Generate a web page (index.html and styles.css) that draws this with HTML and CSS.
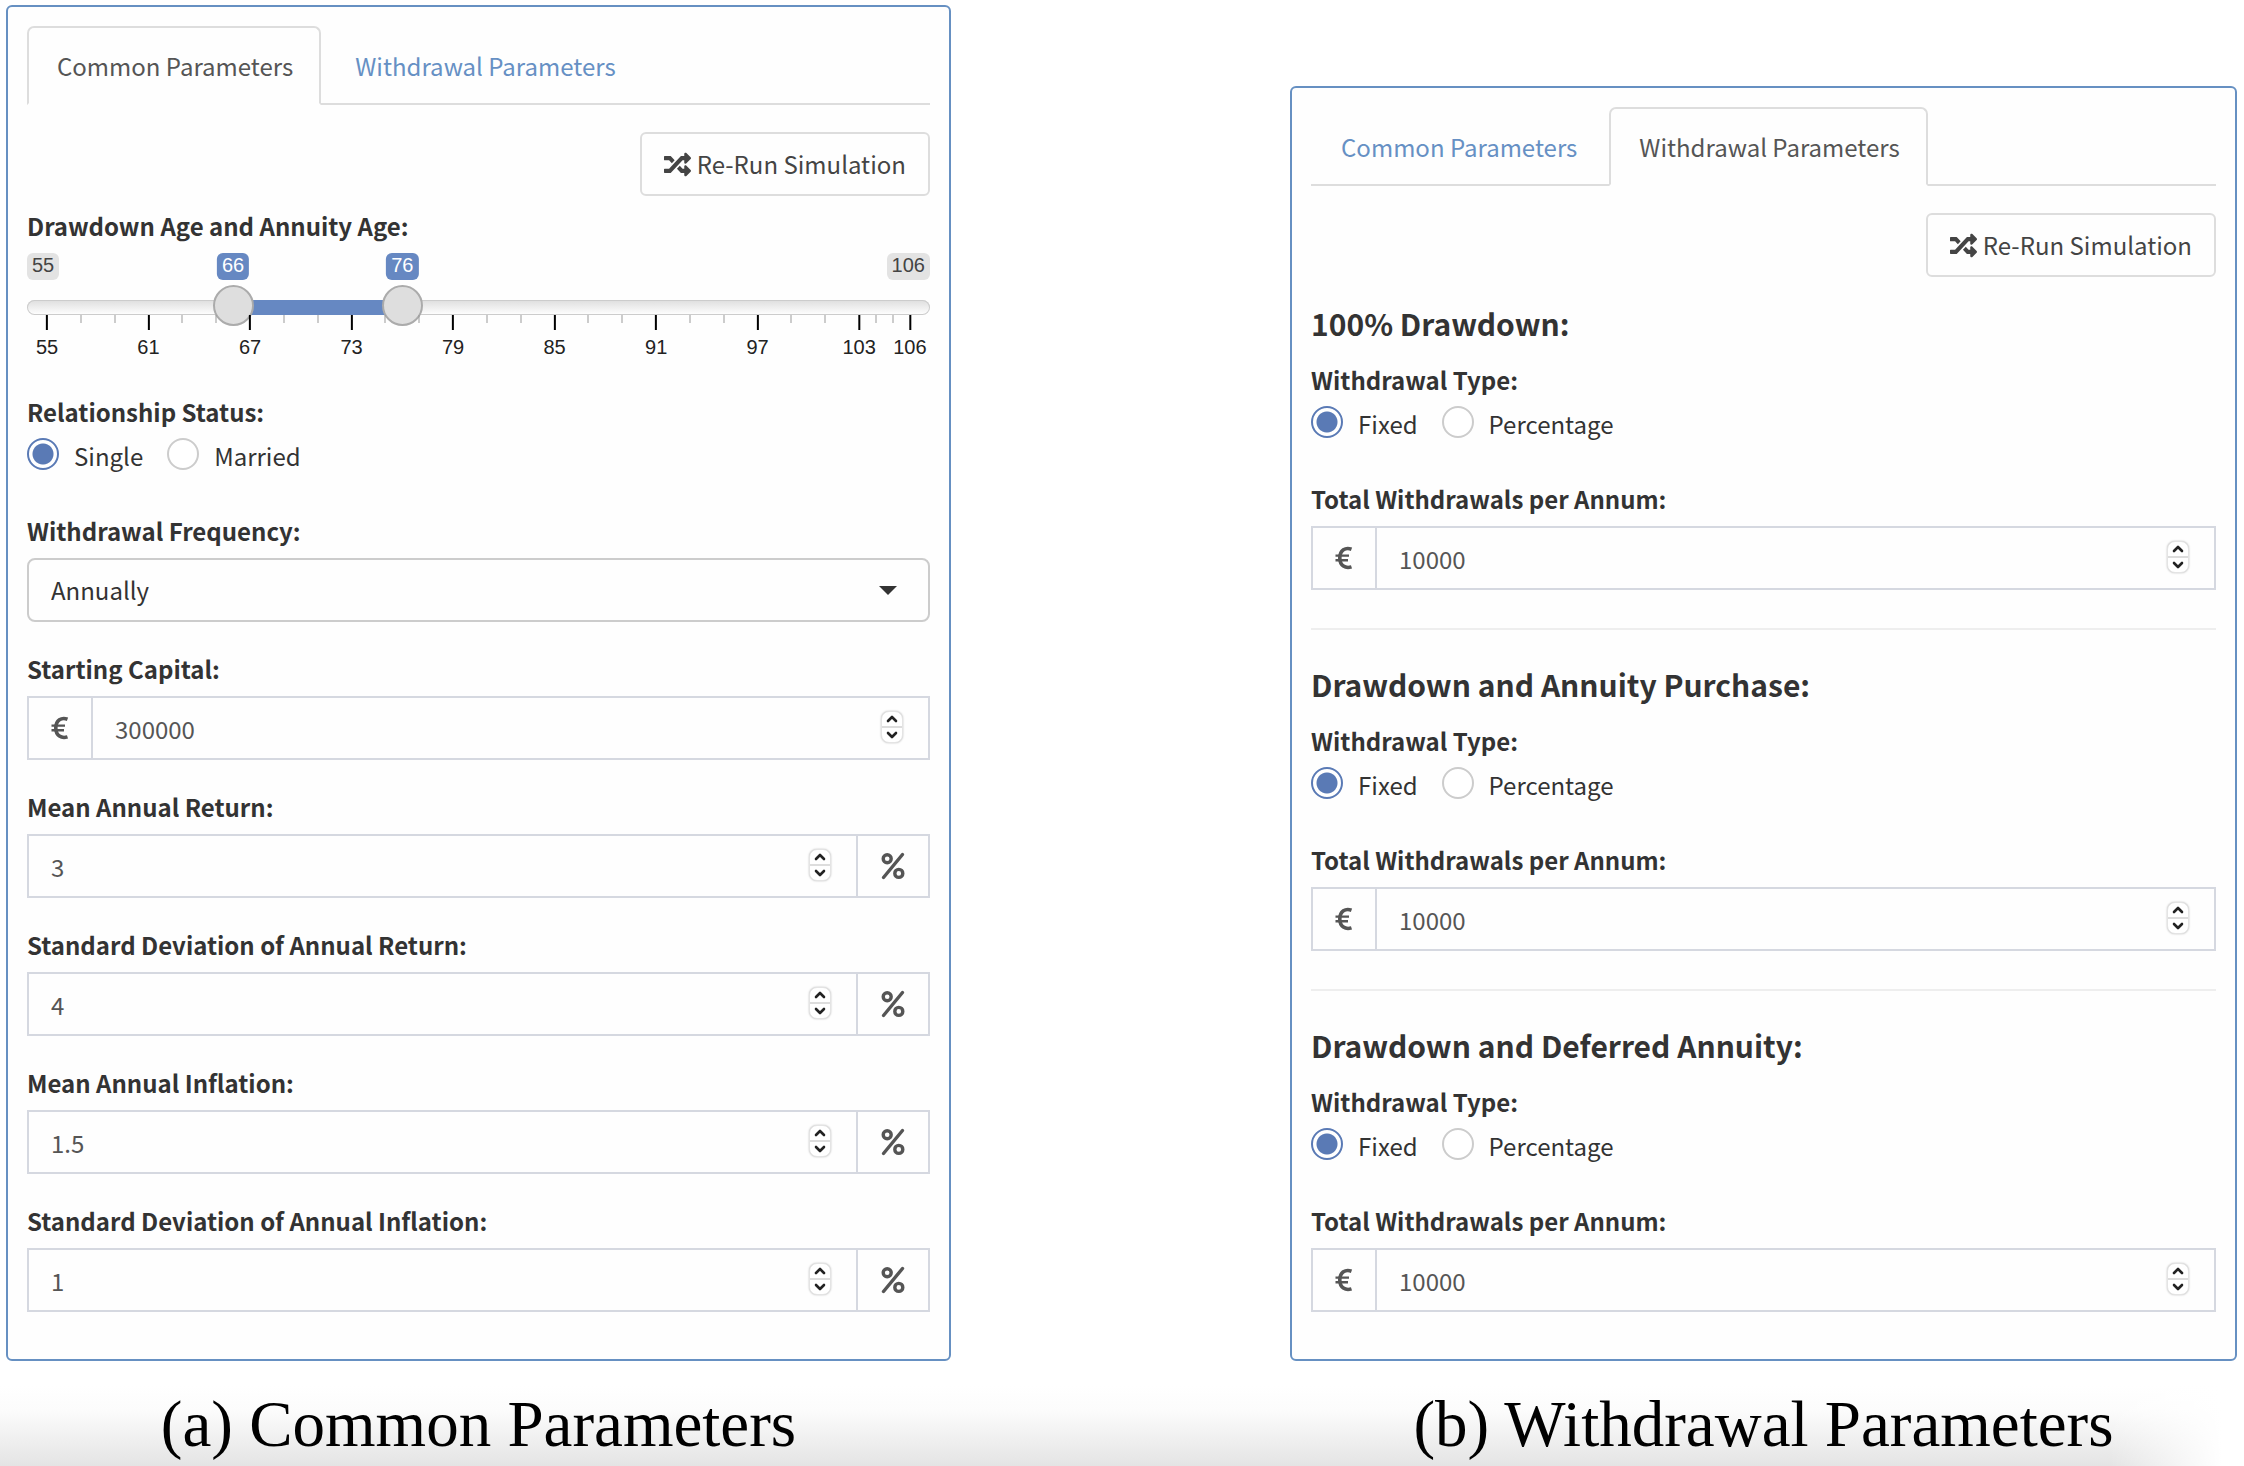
FILE: index.html
```html
<!DOCTYPE html>
<html lang="en">
<head>
<meta charset="utf-8">
<meta name="viewport" content="width=device-width, initial-scale=1">
<title>Simulation Parameters</title>
<link rel="stylesheet" href="styles.css">
</head>
<body>
<svg class="sprite" aria-hidden="true">
  <symbol id="shuffle" viewBox="0 0 512 512"><path d="M504.971 359.029c9.373 9.373 9.373 24.569 0 33.941l-80 79.984c-15.01 15.01-40.971 4.49-40.971-16.971V416h-58.785a12.004 12.004 0 0 1-8.773-3.812l-70.556-75.596 53.333-57.143L352 336h32v-39.981c0-21.438 25.943-31.998 40.971-16.971l80 79.981zM12 176h84l52.781 56.551 53.333-57.143-70.556-75.596A11.999 11.999 0 0 0 122.785 96H12c-6.627 0-12 5.373-12 12v56c0 6.627 5.373 12 12 12zm372 0v39.984c0 21.46 25.961 31.98 40.971 16.971l80-79.984c9.373-9.373 9.373-24.569 0-33.941l-80-79.981C409.943 24.021 384 34.582 384 56.019V96h-58.785a12.004 12.004 0 0 0-8.773 3.812L96 336H12c-6.627 0-12 5.373-12 12v56c0 6.627 5.373 12 12 12h110.785c3.326 0 6.503-1.381 8.773-3.812L352 176h32z" fill="currentColor"/></symbol>
  <symbol id="euro" viewBox="0 0 18 24"><path d="M16.5 3.2C10.500 0.900 4.800 4.200 4.800 12S10.500 22.800 16.500 20.900" fill="none" stroke="currentColor" stroke-width="3.600"/><path d="M0.500 9.600H14M0.500 14.200H13" fill="none" stroke="currentColor" stroke-width="2.400"/></symbol>
  <symbol id="percent" viewBox="0 0 24 28"><g fill="none" stroke="currentColor" stroke-width="3.400"><circle cx="6.200" cy="6.800" r="4"/><circle cx="17.800" cy="21.400" r="4"/><path d="M21.500 2.500L2.500 25.500" stroke-linecap="round"/></g></symbol>
  <symbol id="up" viewBox="0 0 12 8"><path d="M2 6L6 2L10 6" fill="none" stroke="currentColor" stroke-width="2.600" stroke-linecap="round" stroke-linejoin="round"/></symbol>
  <symbol id="down" viewBox="0 0 12 8"><path d="M2 2L6 6L10 2" fill="none" stroke="currentColor" stroke-width="2.600" stroke-linecap="round" stroke-linejoin="round"/></symbol>
</svg>
<main class="page">
  <figure class="figure">
    <section class="panel">
      <nav class="tabs">
        <a class="tab tab-active" href="#common">Common Parameters</a>
        <a class="tab" href="#withdrawal">Withdrawal Parameters</a>
      </nav>
      <div class="actions"><button class="run" type="button"><svg class="run-icon"><use href="#shuffle"/></svg>Re-Run Simulation</button></div>

      <div class="slider-field">
        <label class="label" for="drawdown-age">Drawdown Age and Annuity Age:</label>
        <div class="slider">
          <div class="badges">
            <span class="badge">55</span>
            <span class="badge">106</span>
            <div class="rail">
              <output class="badge badge-value" style="left:21.57%">66</output>
              <output class="badge badge-value" style="left:41.18%">76</output>
            </div>
          </div>
          <div class="track">
            <div class="rail"><span class="fill" style="left:21.57%;width:19.61%"></span></div>
            <input class="range" id="drawdown-age" type="range" min="55" max="106" value="66">
            <input class="range" type="range" min="55" max="106" value="76" aria-label="Annuity Age">
          </div>
          <div class="scale">
            <div class="rail">
              <span class="tick major" style="left:0%">55</span>
              <span class="tick" style="left:3.92%"></span>
              <span class="tick" style="left:7.84%"></span>
              <span class="tick major" style="left:11.76%">61</span>
              <span class="tick" style="left:15.69%"></span>
              <span class="tick" style="left:19.61%"></span>
              <span class="tick major" style="left:23.53%">67</span>
              <span class="tick" style="left:27.45%"></span>
              <span class="tick" style="left:31.37%"></span>
              <span class="tick major" style="left:35.29%">73</span>
              <span class="tick" style="left:39.22%"></span>
              <span class="tick" style="left:43.14%"></span>
              <span class="tick major" style="left:47.06%">79</span>
              <span class="tick" style="left:50.98%"></span>
              <span class="tick" style="left:54.90%"></span>
              <span class="tick major" style="left:58.82%">85</span>
              <span class="tick" style="left:62.75%"></span>
              <span class="tick" style="left:66.67%"></span>
              <span class="tick major" style="left:70.59%">91</span>
              <span class="tick" style="left:74.51%"></span>
              <span class="tick" style="left:78.43%"></span>
              <span class="tick major" style="left:82.35%">97</span>
              <span class="tick" style="left:86.27%"></span>
              <span class="tick" style="left:90.20%"></span>
              <span class="tick major" style="left:94.12%">103</span>
              <span class="tick" style="left:96.08%"></span>
              <span class="tick" style="left:98.04%"></span>
              <span class="tick major" style="left:100%">106</span>
            </div>
          </div>
        </div>
      </div>

      <fieldset class="radios">
        <legend class="label">Relationship Status:</legend>
        <div class="options">
          <label class="option"><input class="radio" type="radio" name="status" checked><span>Single</span></label>
          <label class="option"><input class="radio" type="radio" name="status"><span>Married</span></label>
        </div>
      </fieldset>

      <div class="field">
        <label class="label" for="frequency">Withdrawal Frequency:</label>
        <div class="select-box">
          <select class="select" id="frequency"><option>Annually</option></select>
          <svg class="caret" viewBox="0 0 18 9" aria-hidden="true"><path d="M0 0H18L9 9Z" fill="#333"/></svg>
        </div>
      </div>

      <div class="field">
        <label class="label" for="capital">Starting Capital:</label>
        <div class="group">
          <span class="addon addon-start"><svg class="euro"><use href="#euro"/></svg></span>
          <input class="number" id="capital" type="number" value="300000">
          <span class="spin"><button class="step" type="button" aria-label="Increase"><svg class="chev"><use href="#up"/></svg></button><button class="step" type="button" aria-label="Decrease"><svg class="chev"><use href="#down"/></svg></button></span>
        </div>
      </div>

      <div class="field">
        <label class="label" for="mean-return">Mean Annual Return:</label>
        <div class="group">
          <input class="number" id="mean-return" type="number" value="3">
          <span class="spin"><button class="step" type="button" aria-label="Increase"><svg class="chev"><use href="#up"/></svg></button><button class="step" type="button" aria-label="Decrease"><svg class="chev"><use href="#down"/></svg></button></span>
          <span class="addon addon-end"><svg class="percent"><use href="#percent"/></svg></span>
        </div>
      </div>

      <div class="field">
        <label class="label" for="sd-return">Standard Deviation of Annual Return:</label>
        <div class="group">
          <input class="number" id="sd-return" type="number" value="4">
          <span class="spin"><button class="step" type="button" aria-label="Increase"><svg class="chev"><use href="#up"/></svg></button><button class="step" type="button" aria-label="Decrease"><svg class="chev"><use href="#down"/></svg></button></span>
          <span class="addon addon-end"><svg class="percent"><use href="#percent"/></svg></span>
        </div>
      </div>

      <div class="field">
        <label class="label" for="mean-inflation">Mean Annual Inflation:</label>
        <div class="group">
          <input class="number" id="mean-inflation" type="number" step="0.1" value="1.5">
          <span class="spin"><button class="step" type="button" aria-label="Increase"><svg class="chev"><use href="#up"/></svg></button><button class="step" type="button" aria-label="Decrease"><svg class="chev"><use href="#down"/></svg></button></span>
          <span class="addon addon-end"><svg class="percent"><use href="#percent"/></svg></span>
        </div>
      </div>

      <div class="field">
        <label class="label" for="sd-inflation">Standard Deviation of Annual Inflation:</label>
        <div class="group">
          <input class="number" id="sd-inflation" type="number" value="1">
          <span class="spin"><button class="step" type="button" aria-label="Increase"><svg class="chev"><use href="#up"/></svg></button><button class="step" type="button" aria-label="Decrease"><svg class="chev"><use href="#down"/></svg></button></span>
          <span class="addon addon-end"><svg class="percent"><use href="#percent"/></svg></span>
        </div>
      </div>
    </section>
    <figcaption class="caption">(a) Common Parameters</figcaption>
  </figure>

  <figure class="figure">
    <section class="panel">
      <nav class="tabs">
        <a class="tab" href="#common">Common Parameters</a>
        <a class="tab tab-active" href="#withdrawal">Withdrawal Parameters</a>
      </nav>
      <div class="actions"><button class="run" type="button"><svg class="run-icon"><use href="#shuffle"/></svg>Re-Run Simulation</button></div>

      <div class="strategy">
        <h2 class="heading">100% Drawdown:</h2>
        <fieldset class="radios">
          <legend class="label">Withdrawal Type:</legend>
          <div class="options">
            <label class="option"><input class="radio" type="radio" name="type-1" checked><span>Fixed</span></label>
            <label class="option"><input class="radio" type="radio" name="type-1"><span>Percentage</span></label>
          </div>
        </fieldset>
        <div class="field">
          <label class="label" for="total-1">Total Withdrawals per Annum:</label>
          <div class="group">
            <span class="addon addon-start"><svg class="euro"><use href="#euro"/></svg></span>
            <input class="number" id="total-1" type="number" value="10000">
            <span class="spin"><button class="step" type="button" aria-label="Increase"><svg class="chev"><use href="#up"/></svg></button><button class="step" type="button" aria-label="Decrease"><svg class="chev"><use href="#down"/></svg></button></span>
          </div>
        </div>
      </div>
      <hr class="rule">
      <div class="strategy">
        <h2 class="heading">Drawdown and Annuity Purchase:</h2>
        <fieldset class="radios">
          <legend class="label">Withdrawal Type:</legend>
          <div class="options">
            <label class="option"><input class="radio" type="radio" name="type-2" checked><span>Fixed</span></label>
            <label class="option"><input class="radio" type="radio" name="type-2"><span>Percentage</span></label>
          </div>
        </fieldset>
        <div class="field">
          <label class="label" for="total-2">Total Withdrawals per Annum:</label>
          <div class="group">
            <span class="addon addon-start"><svg class="euro"><use href="#euro"/></svg></span>
            <input class="number" id="total-2" type="number" value="10000">
            <span class="spin"><button class="step" type="button" aria-label="Increase"><svg class="chev"><use href="#up"/></svg></button><button class="step" type="button" aria-label="Decrease"><svg class="chev"><use href="#down"/></svg></button></span>
          </div>
        </div>
      </div>
      <hr class="rule">
      <div class="strategy">
        <h2 class="heading">Drawdown and Deferred Annuity:</h2>
        <fieldset class="radios">
          <legend class="label">Withdrawal Type:</legend>
          <div class="options">
            <label class="option"><input class="radio" type="radio" name="type-3" checked><span>Fixed</span></label>
            <label class="option"><input class="radio" type="radio" name="type-3"><span>Percentage</span></label>
          </div>
        </fieldset>
        <div class="field">
          <label class="label" for="total-3">Total Withdrawals per Annum:</label>
          <div class="group">
            <span class="addon addon-start"><svg class="euro"><use href="#euro"/></svg></span>
            <input class="number" id="total-3" type="number" value="10000">
            <span class="spin"><button class="step" type="button" aria-label="Increase"><svg class="chev"><use href="#up"/></svg></button><button class="step" type="button" aria-label="Decrease"><svg class="chev"><use href="#down"/></svg></button></span>
          </div>
        </div>
      </div>
    </section>
    <figcaption class="caption">(b) Withdrawal Parameters</figcaption>
  </figure>
</main>
</body>
</html>
```

FILE: styles.css
```css
*, *::before, *::after { box-sizing: border-box; }

body {
  margin: 0;
  background: #fff;
  color: #333;
  font: 24px/34px "Noto Sans CJK SC", "Open Sans", sans-serif;
}

button, input, select { font: inherit; color: inherit; margin: 0; }

.sprite { display: none; }

.page {
  display: grid;
  grid-template-columns: 945fr 947fr;
  column-gap: 15.2%;
  align-items: end;
  min-height: 100vh;
  padding: 5px 7px 0 6px;
  background:
    linear-gradient(to right, transparent 94%, #fff 99%) bottom / 100% 80px no-repeat,
    linear-gradient(#fff, #fcfcfc 30%, #e4e4e4) bottom / 100% 80px no-repeat;
}

.figure { margin: 0; min-width: 0; }

.panel {
  padding: 19px 19px 47px;
  border: 2px solid #6690c2;
  border-radius: 6px;
  background: #fefefe;
}

.caption {
  height: 105px;
  padding-top: 23px;
  color: #000;
  font: 65px/80px "Liberation Serif", serif;
  text-align: center;
  white-space: nowrap;
}

/* Tabs */
.tabs {
  display: flex;
  gap: 4px;
  height: 79px;
  margin-bottom: 27px;
  border-bottom: 2px solid #ddd;
}
.tab {
  height: 79px;
  padding: 21px 26px 21px 28px;
  border: 2px solid transparent;
  border-radius: 7px 7px 0 0;
  color: #6690c4;
  text-decoration: none;
}
.tab-active {
  border-color: #ddd;
  border-bottom-color: #fefefe;
  background: #fefefe;
  color: #555;
}

.actions { display: flex; justify-content: flex-end; }
.run {
  display: flex;
  align-items: center;
  gap: 6px;
  height: 64px;
  padding: 0 22px;
  border: 2px solid #ddd;
  border-radius: 6px;
  background: #fefefe;
  color: #444;
}
.run-icon { width: 27px; height: 27px; }

/* Fields */
.label { display: block; padding: 0; font-weight: 700; margin-bottom: 10px; }
.field + .field { margin-top: 30px; }

.radios { margin: 0 0 44px; padding: 0; border: 0; min-width: 0; }
.radios .label { margin-bottom: 9px; }
.options { display: flex; gap: 24px; height: 32px; }
.option { display: flex; align-items: center; gap: 15px; }
.option span { padding-top: 4px; }
.radio {
  appearance: none;
  width: 32px;
  height: 32px;
  border: 2px solid #ccc;
  border-radius: 50%;
  background: #fff;
}
.radio:checked {
  border-color: #5a7ab5;
  background: radial-gradient(circle, #5a7ab5 10px, #fff 11px);
}

.select-box { display: grid; align-items: center; }
.select {
  grid-area: 1 / 1;
  appearance: none;
  width: 100%;
  height: 64px;
  padding: 0 22px;
  border: 2px solid #ccc;
  border-radius: 8px;
  background: #fefefe;
}
.caret {
  grid-area: 1 / 1;
  justify-self: end;
  width: 18px;
  height: 9px;
  margin-right: 33px;
  pointer-events: none;
}

.group {
  display: flex;
  align-items: center;
  height: 64px;
  border: 2px solid #d5d8e0;
  background: #fefefe;
  color: #555;
}
.number {
  appearance: textfield;
  flex: 1;
  min-width: 0;
  height: 60px;
  padding: 0 22px;
  border: 0;
  background: transparent;
}
.number::-webkit-inner-spin-button { appearance: none; margin: 0; }

.addon { display: flex; align-items: center; justify-content: center; height: 60px; }
.addon-start { width: 64px; border-right: 2px solid #d5d8e0; }
.addon-end { width: 72px; border-left: 2px solid #d5d8e0; }
.euro { width: 18px; height: 24px; }
.percent { width: 24px; height: 28px; }

.spin {
  display: flex;
  flex-direction: column;
  width: 22px;
  height: 32px;
  margin: 0 25px 2px 0;
  border: 1px solid #e4e4e4;
  border-radius: 8px;
  background: #fff;
  box-shadow: 0 0 2px #bbb;
}
.step {
  display: flex;
  flex: 1;
  align-items: center;
  justify-content: center;
  padding: 0;
  border: 0;
  background: transparent;
  color: #222;
}
.step + .step { border-top: 2px solid #ddd; }
.chev { width: 12px; height: 8px; }

/* Age slider */
.slider-field { margin: 13px 0 30px; }
.slider { height: 112px; font: 20px/25px "Liberation Sans", Arial, sans-serif; }
.rail { position: absolute; inset: 0 20px; }

.badges {
  position: relative;
  display: flex;
  justify-content: space-between;
  margin-bottom: 20px;
}
.badge {
  height: 27px;
  padding: 0 5px;
  border-radius: 6px;
  background: #e3e3e3;
  color: #444;
}
.badge-value {
  position: absolute;
  top: 0;
  transform: translateX(-50%);
  background: #6688c2;
  color: #fff;
}

.track {
  position: relative;
  height: 15px;
  border-radius: 8px;
  background: linear-gradient(#dedede, #fff);
  box-shadow: inset 0 0 0 1px #ccc;
}
.fill { position: absolute; top: 0; bottom: 0; background: #6688c2; }
.range {
  appearance: none;
  position: absolute;
  top: -15px;
  left: 0;
  width: 100%;
  height: 41px;
  background: transparent;
  pointer-events: none;
}
.range::-webkit-slider-thumb {
  appearance: none;
  width: 41px;
  height: 41px;
  border: 2px solid #ababab;
  border-radius: 50%;
  background: #dedede;
  pointer-events: auto;
}

.scale { position: relative; height: 50px; color: #222; }
.tick {
  position: absolute;
  top: 0;
  transform: translateX(-50%);
}
.tick::before {
  content: "";
  display: block;
  width: 1px;
  height: 8px;
  margin: 0 auto;
  background: #999;
}
.major::before {
  width: 2px;
  height: 15px;
  margin-bottom: 5px;
  background: #000;
}

/* Withdrawal strategies */
.heading { margin: 0 0 20px; font-size: 30px; line-height: 40px; }
.actions + .strategy { margin-top: 26px; }
.rule { margin: 38px 0 34px; border: 0; border-top: 2px solid #eee; }
```
